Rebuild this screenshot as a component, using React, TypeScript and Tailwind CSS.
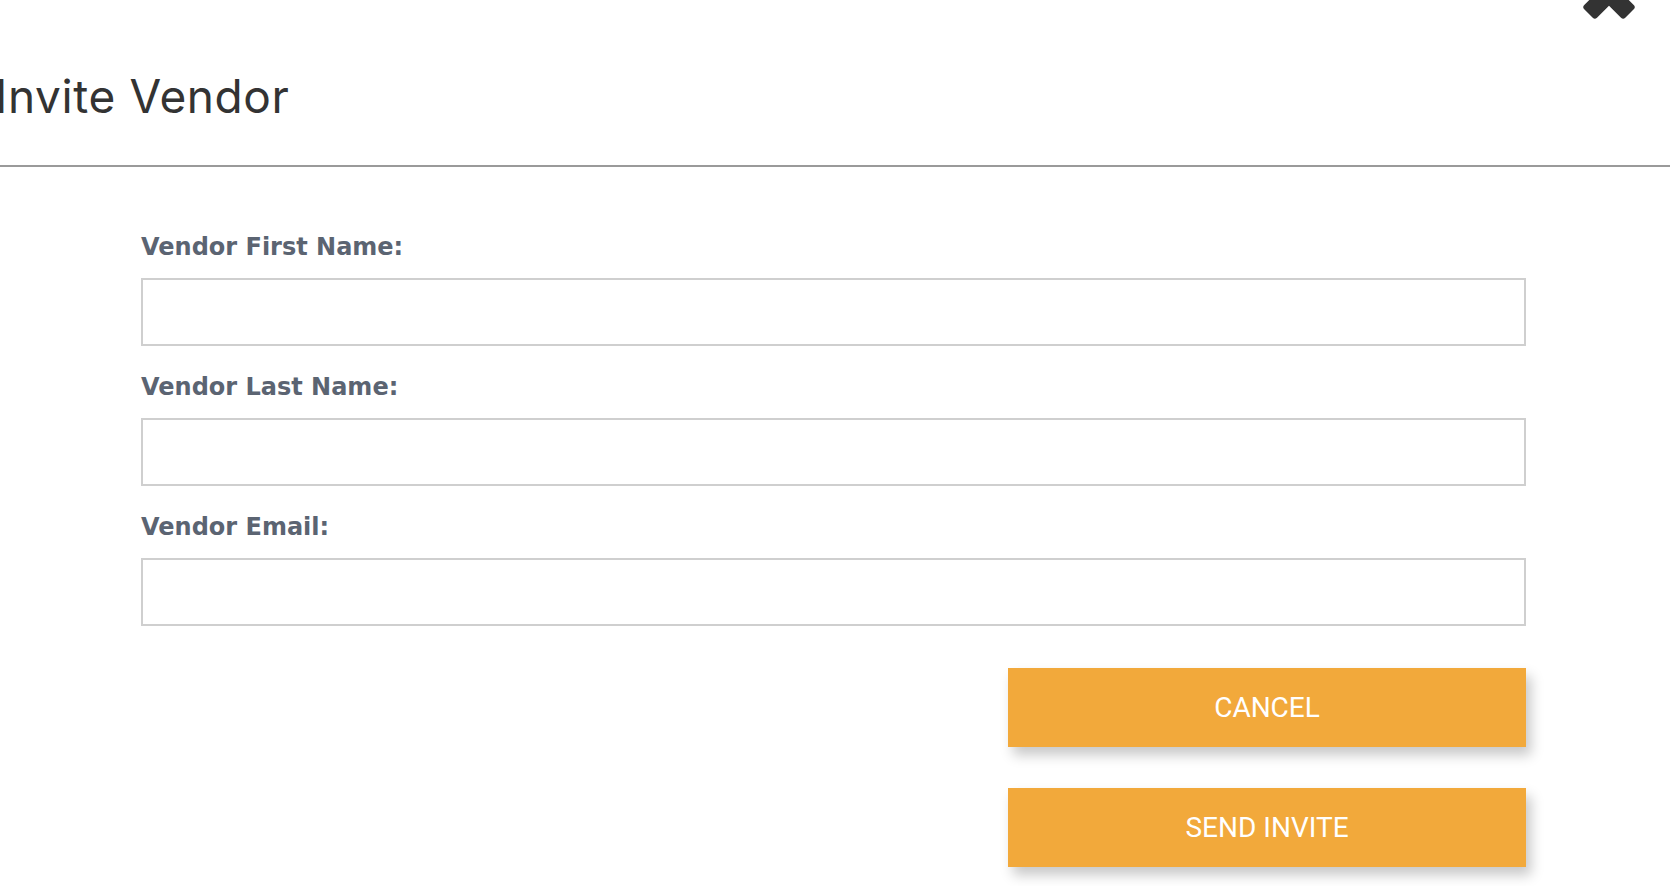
import React from "react";

const fields = ["Vendor First Name:", "Vendor Last Name:", "Vendor Email:"];

function CloseIcon() {
  return (
    <svg className="absolute left-[1570px] top-[-45px] w-[80px] h-[80px]" viewBox="0 0 80 80" fill="#333333">
      <rect x="10" y="29" width="58" height="18" rx="3" transform="rotate(45 39 38)" />
      <rect x="10" y="29" width="58" height="18" rx="3" transform="rotate(-45 39 38)" />
    </svg>
  );
}

export default function App() {
  return (
    <div className="relative w-full h-[886px] bg-white overflow-hidden font-['Inter',sans-serif]">
      <CloseIcon />

      {/* Header */}
      <div className="pt-[74px] h-[165px]">
        <h1 className="ml-[-5px] text-[46px] leading-[45px] tracking-[0.6px] font-normal text-[#333333]">Invite Vendor</h1>
      </div>
      <div className="h-[2px] bg-[#9a9a9a]" />

      {/* Form */}
      <div className="pl-[141px] pr-[144px] pt-[65px]">
        {fields.map((f) => (
          <div key={f} className="mb-[26px]">
            <label className="block font-['DejaVu_Sans',sans-serif] text-[24px] leading-[30px] font-bold text-[#5b6472] mb-[16px]">{f}</label>
            <input type="text" className="block w-full h-[68px] border-2 border-[#cfcfcf] bg-white outline-none" />
          </div>
        ))}

        <div className="flex flex-col items-end gap-[41px] mt-[42px]">
          <button className="w-[518px] h-[79px] bg-[#f2a93b] text-white text-[28px] font-['Roboto',sans-serif] shadow-[5px_8px_12px_rgba(0,0,0,0.22)]">
            CANCEL
          </button>
          <button className="w-[518px] h-[79px] bg-[#f2a93b] text-white text-[28px] font-['Roboto',sans-serif] shadow-[5px_8px_12px_rgba(0,0,0,0.22)]">
            SEND INVITE
          </button>
        </div>
      </div>
    </div>
  );
}
